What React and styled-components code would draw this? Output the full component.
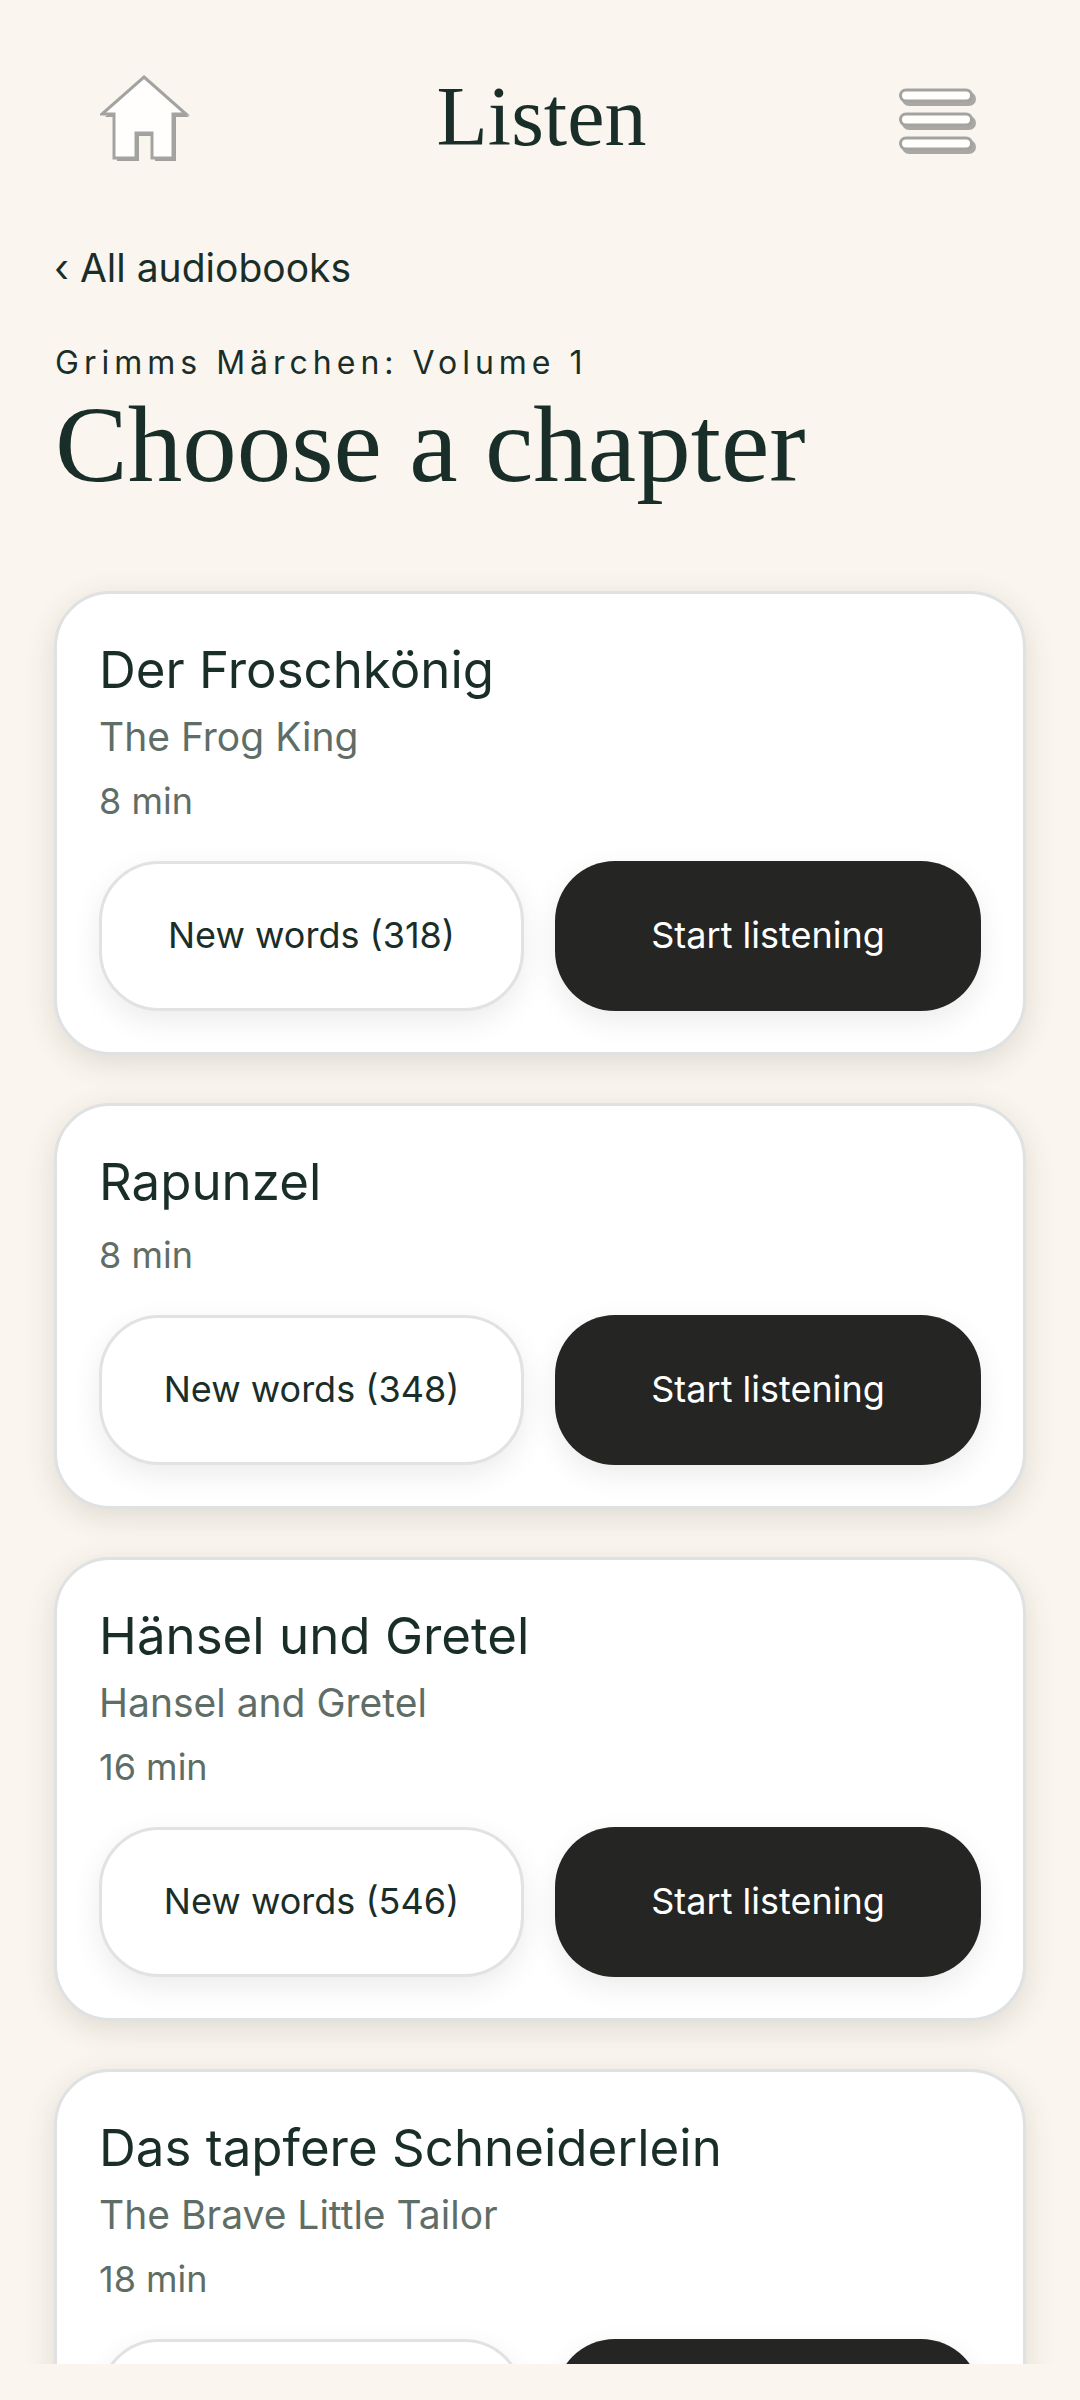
import React from 'react';
import styled, { createGlobalStyle } from 'styled-components';

const GlobalStyle = createGlobalStyle`
  html, body {
    margin: 0;
    padding: 0;
    background: #faf6ef;
  }
  body {
    font-family: Inter, "Liberation Sans", sans-serif;
    color: #1a2e29;
  }
`;

const Screen = styled.div`
  width: 1080px;
  height: 2400px;
  padding-bottom: 36px;
  box-sizing: border-box;
  background: #faf6ef;
`;

const Viewport = styled.div`
  height: 2364px;
  overflow: hidden;
  padding: 60px 54px 0;
  box-sizing: border-box;
`;

const TopBar = styled.header`
  display: flex;
  align-items: center;
  justify-content: space-between;
  height: 120px;
  padding: 0 47px 0 46px;
`;

const ScreenTitle = styled.h1`
  margin: 0 0 6px;
  font-family: "Liberation Serif", serif;
  font-weight: 400;
  font-size: 84px;
  line-height: 1;
  color: #1a2e29;
`;

const BackLink = styled.a`
  display: block;
  margin-top: 66px;
  font-size: 39px;
  line-height: 44px;
  color: #1a2e29;
`;

const BookName = styled.div`
  margin: 55px 0 0 1px;
  font-size: 32px;
  line-height: 36px;
  letter-spacing: 5px;
  color: #1a2e29;
`;

const Heading = styled.h2`
  margin: 10px 0 92px 1px;
  font-family: "Liberation Serif", serif;
  font-weight: 400;
  font-size: 109px;
  line-height: 108px;
  color: #1a2e29;
`;

const ChapterList = styled.div`
  display: flex;
  flex-direction: column;
  gap: 48px;
`;

const Card = styled.article`
  box-sizing: border-box;
  width: 972px;
  padding: 43px 42px 41px;
  background: #fff;
  border: 3px solid #dfe1e2;
  border-radius: 56px;
  box-shadow: 0 8px 30px rgba(60, 50, 30, 0.14);
`;

const ChapterTitle = styled.h3`
  margin: 0;
  font-weight: 400;
  font-size: 51px;
  line-height: 66px;
  color: #1a2e29;
`;

const Translation = styled.div`
  margin-top: 10px;
  font-size: 39px;
  line-height: 48px;
  color: #5f6d67;
`;

const Duration = styled.div`
  margin-top: 18px;
  font-size: 36px;
  line-height: 44px;
  color: #5f6d67;
`;

const Actions = styled.div`
  display: grid;
  grid-template-columns: 425px 426px;
  gap: 31px;
  margin-top: 38px;
`;

const ActionButton = styled.button`
  box-sizing: border-box;
  height: 150px;
  padding: 0 0 2px;
  border-radius: 60px;
  font-family: inherit;
  font-size: 36px;
  border: ${(p) => (p.$primary ? 'none' : '3px solid #e2e2e0')};
  background: ${(p) => (p.$primary ? '#252523' : '#fff')};
  color: ${(p) => (p.$primary ? '#fff' : '#1a2e29')};
  box-shadow: 0 10px 30px rgba(0, 0, 0, 0.08);
`;

const housePath = 'M44 2 L86 39 L73 39 L73 83 L52 83 L52 58 L36 58 L36 83 L14 83 L14 39 L2 39 Z';

const HomeIcon = () => (
  <svg width="90" height="90" viewBox="0 0 90 90">
    <path d={housePath} fill="#a3a19c" transform="translate(3 3)" />
    <path d={housePath} fill="#fffefc" stroke="#a3a3a1" strokeWidth="3" />
  </svg>
);

const MenuIcon = () => (
  <svg width="86" height="72" viewBox="0 0 86 72">
    {[6, 30, 54].map((y) => (
      <g key={y}>
        <rect x="9" y={y + 2} width="74" height="14" rx="7" fill="#aaa8a3" />
        <rect x="7.5" y={y} width="71" height="11" rx="5.5" fill="#fffefc" stroke="#a3a3a1" strokeWidth="3" />
      </g>
    ))}
  </svg>
);

// the last card runs off the screen above its button labels
const chapters = [
  { title: 'Der Froschkönig', en: 'The Frog King', min: 8, words: 318 },
  { title: 'Rapunzel', min: 8, words: 348 },
  { title: 'Hänsel und Gretel', en: 'Hansel and Gretel', min: 16, words: 546 },
  { title: 'Das tapfere Schneiderlein', en: 'The Brave Little Tailor', min: 18 },
];

export default function App() {
  return (
    <Screen>
      <GlobalStyle />
      <Viewport>
        <TopBar>
          <HomeIcon />
          <ScreenTitle>Listen</ScreenTitle>
          <MenuIcon />
        </TopBar>
        <BackLink>‹ All audiobooks</BackLink>
        <BookName>Grimms Märchen: Volume 1</BookName>
        <Heading>Choose a chapter</Heading>
        <ChapterList>
          {chapters.map((c) => (
            <Card key={c.title}>
              <ChapterTitle>{c.title}</ChapterTitle>
              {c.en && <Translation>{c.en}</Translation>}
              <Duration>{c.min} min</Duration>
              <Actions>
                <ActionButton>{c.words && `New words (${c.words})`}</ActionButton>
                <ActionButton $primary>{c.words && 'Start listening'}</ActionButton>
              </Actions>
            </Card>
          ))}
        </ChapterList>
      </Viewport>
    </Screen>
  );
}
